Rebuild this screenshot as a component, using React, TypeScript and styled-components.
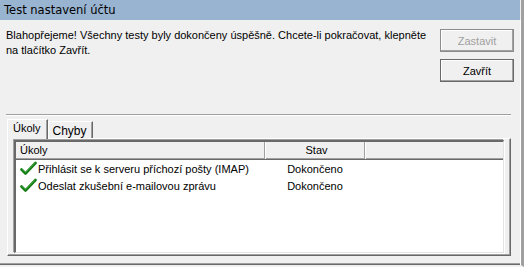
import styled, { createGlobalStyle } from "styled-components"

const GlobalStyle = createGlobalStyle`
  html, body {
    margin: 0;
    padding: 0;
    background: #f0f0f0;
  }
  body {
    font-family: "Liberation Sans", Arial, sans-serif;
    font-size: 11px;
    color: #000;
  }
`

type Task = { name: string; status: string }

const tasks: Task[] = [
  { name: "Přihlásit se k serveru příchozí pošty (IMAP)", status: "Dokončeno" },
  { name: "Odeslat zkušební e-mailovou zprávu", status: "Dokončeno" },
]

const CheckIcon = () => (
  <svg width="17" height="15" viewBox="0 0 17 15">
    <path d="M1.5 8.5 L5.5 12.5 L15.5 2" fill="none" stroke="#137a13" strokeWidth="2.6" strokeLinecap="round" strokeLinejoin="round" />
    <path d="M2 8.3 L5.5 11.6 L15 2.2" fill="none" stroke="#3fae3f" strokeWidth="0.9" strokeLinecap="round" />
  </svg>
)

const App = () => {
  return (
    <>
      <GlobalStyle />
      <Window>
        <TitleBar>Test nastavení účtu</TitleBar>
        <TopRow>
          <Message>
            Blahopřejeme! Všechny testy byly dokončeny úspěšně. Chcete-li pokračovat, klepněte
            <br />
            na tlačítko Zavřít.
          </Message>
          <ButtonColumn>
            <Button disabled>Zastavit</Button>
            <Button>Zavřít</Button>
          </ButtonColumn>
        </TopRow>
        <Separator />
        <TabStrip>
          <Tab $active>Úkoly</Tab>
          <Tab>Chyby</Tab>
        </TabStrip>
        <TabPanel>
          <ListView>
            <Header>
              <HeaderCell $width={249}>Úkoly</HeaderCell>
              <HeaderCell $width={100} $center>
                Stav
              </HeaderCell>
              <HeaderFiller />
            </Header>
            {tasks.map((t) => (
              <Row key={t.name}>
                <NameCell>
                  <CheckIcon />
                  <span>{t.name}</span>
                </NameCell>
                <StatusCell>{t.status}</StatusCell>
              </Row>
            ))}
          </ListView>
        </TabPanel>
      </Window>
    </>
  )
}
export default App

const Window = styled.div`
  width: 524px;
  height: 267px;
  box-sizing: border-box;
  display: flex;
  flex-direction: column;
  background: #f0f0f0;
  border-right: 3px solid #a0a0a0;
  border-bottom: 2px solid #f0f0f0;
  box-shadow: inset -1px 0 0 #ffffff, inset 0 -1px 0 #6a6a6a, inset 0 -2px 0 #a0a0a0;
  overflow: hidden;
`

const TitleBar = styled.div`
  height: 20px;
  line-height: 20px;
  background: #99b4d1;
  padding-left: 4px;
  font-family: "DejaVu Sans", sans-serif;
  font-size: 11.5px;
  box-shadow: inset -1px 0 0 #f0f0f0;
`

const TopRow = styled.div`
  display: flex;
  align-items: flex-start;
  padding: 8px 7px 0 6px;
`

const Message = styled.div`
  flex: 1;
  line-height: 15px;
`

const ButtonColumn = styled.div`
  display: flex;
  flex-direction: column;
  gap: 7px;
  margin-top: 1px;
`

const Button = styled.button`
  width: 74px;
  height: 23px;
  box-sizing: border-box;
  background: #f0f0f0;
  border: 1px solid #696969;
  box-shadow: inset -1px -1px 0 #a0a0a0, inset 1px 1px 0 #ffffff;
  font-family: "Liberation Sans", Arial, sans-serif;
  font-size: 11px;
  color: #000;
  padding: 0;
  &:disabled {
    color: #a0a0a0;
    border-color: #8c8c8c;
  }
`

const Separator = styled.div`
  margin: 32px 10px 0 6px;
  height: 1px;
  background: #a0a0a0;
  border-bottom: 1px solid #ffffff;
`

const TabStrip = styled.div`
  display: flex;
  align-items: flex-end;
  height: 19px;
  margin: 3px 0 0 7px;
`

const Tab = styled.div<{ $active?: boolean }>`
  box-sizing: border-box;
  height: ${(p) => (p.$active ? "20px" : "17px")};
  margin-bottom: ${(p) => (p.$active ? "-1px" : "0")};
  padding: ${(p) => (p.$active ? "2px 6px 0 5px" : "2px 5px 0 4px")};
  background: #f0f0f0;
  border-left: 1px solid #ffffff;
  border-top: 1px solid #ffffff;
  border-right: 1px solid #696969;
  box-shadow: inset -1px 0 0 #a0a0a0;
  font-size: ${(p) => (p.$active ? "11px" : "12px")};
  position: relative;
  z-index: ${(p) => (p.$active ? 1 : 0)};
`

const TabPanel = styled.div`
  box-sizing: border-box;
  margin: 0 10px 0 7px;
  height: 118px;
  padding: 1px 6px 2px 6px;
  border-left: 1px solid #ffffff;
  border-top: 1px solid #ffffff;
  border-right: 1px solid #696969;
  border-bottom: 1px solid #696969;
  box-shadow: inset -1px -1px 0 #a0a0a0;
`

const ListView = styled.div`
  box-sizing: border-box;
  height: 113px;
  background: #ffffff;
  border-top: 2px solid #696969;
  border-left: 2px solid #696969;
  border-right: 1px solid #e3e3e3;
  border-bottom: 1px solid #e3e3e3;
  box-shadow: -1px -1px 0 #a0a0a0, 1px 1px 0 #ffffff;
`

const Header = styled.div`
  display: flex;
  height: 17px;
  background: #f0f0f0;
  border-bottom: 1px solid #696969;
  box-shadow: inset 0 -1px 0 #a0a0a0;
`

const HeaderCell = styled.div<{ $width: number; $center?: boolean }>`
  box-sizing: border-box;
  width: ${(p) => p.$width}px;
  padding-left: 4px;
  line-height: 16px;
  text-align: ${(p) => (p.$center ? "center" : "left")};
  border-right: 1px solid #a0a0a0;
  box-shadow: 1px 0 0 #ffffff;
`

const HeaderFiller = styled.div`
  flex: 1;
  border-left: 1px solid #ffffff;
`

const Row = styled.div`
  display: flex;
  align-items: center;
  height: 17px;
`

const NameCell = styled.div`
  width: 249px;
  display: flex;
  align-items: center;
  gap: 1px;
  padding-left: 4px;
  box-sizing: border-box;
  svg {
    flex-shrink: 0;
  }
`

const StatusCell = styled.div`
  width: 100px;
  text-align: center;
`
